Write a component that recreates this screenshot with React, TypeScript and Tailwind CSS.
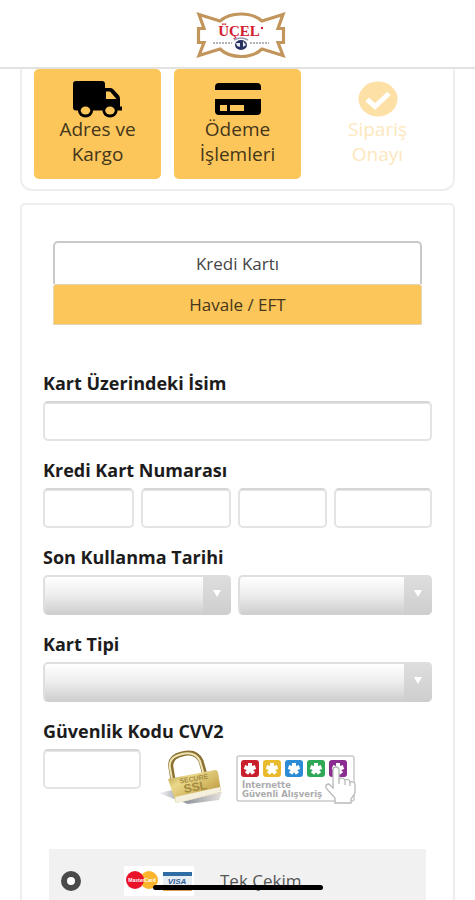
import type { ReactNode } from "react";

const inputClass =
  "block h-10 w-full min-w-0 rounded-[5px] border-2 border-[#e4e4e4] border-t-[#d6d6d6] bg-white px-2 text-base text-gray-800 shadow-[inset_0_1px_0_#e6e6e6] outline-none focus:border-[#fcc65b]";

function Logo() {
  return (
    <svg viewBox="0 0 92 48" className="h-12 w-[92px]" role="img" aria-label="Üçel">
      <path
        d="M4 3.500L25 10Q33 3 46 3Q59 3 67 10L88 3.500L83 17.500H88.500V31.500H83L88 44.500L67 38Q59 45.500 46 45.500Q33 45.500 25 38L4 44.500L9 31.500H3.500V17.500H9Z"
        fill="#fff"
        stroke="#c2955c"
        strokeWidth="3.200"
      />
      <text x="44" y="24.500" textAnchor="middle" fontSize="15" fontWeight="700" fill="#d3202f" fontFamily="Liberation Serif, serif">
        ÜÇEL
      </text>
      <circle cx="67" cy="17" r="1.200" fill="#d3202f" />
      <path d="M39 29Q46 25 53 29" fill="none" stroke="#9a9db5" strokeWidth="1.500" />
      <path d="M18 32H37M55 32H74" stroke="#9a9aa2" strokeWidth="1.500" strokeDasharray="2 1" />
      <ellipse cx="46" cy="34" rx="6" ry="5" fill="#26315f" />
      <path d="M41 32L45 32L45 36L42 35ZM48 30L51 34L48 36Z" fill="#e6e9f4" />
    </svg>
  );
}

function TruckIcon() {
  return (
    <svg viewBox="0 0 50 37" className="h-[37px] w-[50px]" aria-hidden="true">
      <path
        fillRule="evenodd"
        d="M3 0H29Q32 0 32 3V7H37Q39 7 40 8L46 14.500Q47 16 47 18V25.500H49V29.500H3Q0 29.500 0 26.500V3Q0 0 3 0ZM33 10.500V18H43.500L37 10.500Z"
      />
      <ellipse cx="12.500" cy="30" rx="7.500" ry="6.500" />
      <ellipse cx="37" cy="30" rx="7.500" ry="6.500" />
      <ellipse cx="12.500" cy="29.500" rx="4.800" ry="4" fill="#fcc65b" />
      <ellipse cx="37" cy="29.500" rx="4.800" ry="4" fill="#fcc65b" />
    </svg>
  );
}

function CardIcon() {
  return (
    <svg viewBox="0 0 46 32" className="h-8 w-[46px]" aria-hidden="true">
      <path
        fillRule="evenodd"
        d="M4 0H42Q46 0 46 4V7H0V4Q0 0 4 0ZM0 16H46V28Q46 32 42 32H4Q0 32 0 28ZM5 22V28H12V22ZM15 22V28H29V22Z"
      />
    </svg>
  );
}

function CheckIcon() {
  return (
    <svg viewBox="0 0 40 36" className="h-9 w-10" aria-hidden="true">
      <ellipse cx="20" cy="18" rx="19.500" ry="17.500" fill="#fde0a6" />
      <path d="M9 18.500L17 25.500L31 12.500" fill="none" stroke="#fff" strokeWidth="5" />
    </svg>
  );
}

function Step({ icon, lines, done }: { icon: ReactNode; lines: [string, string]; done: boolean }) {
  return (
    <li
      className={
        done
          ? "flex h-[110px] flex-col items-center rounded-[5px] bg-[#fcc65b] pt-3 text-[#45361a]"
          : "flex h-[110px] flex-col items-center pt-3 text-[#fde7bd]"
      }
    >
      <div className="flex h-9 items-center justify-center">{icon}</div>
      <p className="text-center text-[19px] leading-[25px]">
        {lines[0]}
        <br />
        {lines[1]}
      </p>
    </li>
  );
}

function FieldLabel({ htmlFor, children }: { htmlFor: string; children: ReactNode }) {
  return (
    <label htmlFor={htmlFor} className="mb-1.5 block text-lg leading-6 font-bold text-[#1c1c1c]">
      {children}
    </label>
  );
}

function SelectBox({ id, label }: { id: string; label?: string }) {
  return (
    <div className="relative">
      <select
        id={id}
        aria-label={label}
        className="block h-10 w-full appearance-none rounded-[5px] border-2 border-[#dfdfdf] border-b-[#d0d0d0] bg-linear-to-b from-white via-[#ededed] to-[#d0d0d0] px-2 text-base outline-none"
      />
      <span className="pointer-events-none absolute inset-y-0 right-0 flex w-7 items-center justify-center rounded-r-[5px] bg-linear-to-b from-[#dedede] to-[#cecece]">
        <svg viewBox="0 0 8 7" className="mb-1 h-[7px] w-2" aria-hidden="true">
          <path d="M0 0H8L4 7Z" fill="#fff" />
        </svg>
      </span>
    </div>
  );
}

function Padlock() {
  return (
    <svg viewBox="0 0 66 56" className="h-14 w-[66px]" role="img" aria-label="SSL">
      <defs>
        <linearGradient id="brass" x1="0" x2="1" y1="0" y2="1">
          <stop offset="0" stopColor="#b0913c" />
          <stop offset=".3" stopColor="#ead98a" />
          <stop offset=".65" stopColor="#cdb058" />
          <stop offset="1" stopColor="#9a7c30" />
        </linearGradient>
        <linearGradient id="floor" x1="0" x2="1">
          <stop offset="0" stopColor="#fff" />
          <stop offset=".4" stopColor="#8b909b" />
          <stop offset="1" stopColor="#e4e2dc" />
        </linearGradient>
      </defs>
      <path d="M0 43L15 40L24 52L64 42L61 50L30 54Z" fill="url(#floor)" />
      <path d="M15 30L13 18Q11 7 24 4Q38 0 43 11L47 25" fill="none" stroke="#8a7132" strokeWidth="5" />
      <path d="M14 29L12 18Q10 7 24 4Q37 1 42 11L46 25" fill="none" stroke="#eee4b2" strokeWidth="2" />
      <path d="M10 29L57 20Q59 20 60 22L63 42L18 53Z" fill="url(#brass)" />
      <path d="M17 47L62 37L63 42L18 53Z" fill="#f4f0dd" />
      <g transform="rotate(-10 37 35)" fontFamily="Liberation Sans, sans-serif" fontWeight="700" fill="#a38a42" textAnchor="middle">
        <text x="37" y="31" fontSize="7">SECURE</text>
        <text x="37" y="41" fontSize="12">SSL</text>
      </g>
    </svg>
  );
}

const starColors = ["#c9202e", "#e9b92e", "#2b8bd4", "#2fa858", "#8b2c91"];

function SafeShopping() {
  return (
    <svg viewBox="0 0 122 50" className="h-[50px] w-[122px]" role="img" aria-label="İnternette Güvenli Alışveriş">
      <rect x="1" y="1" width="117" height="45" rx="2" fill="#fff" stroke="#cacaca" strokeWidth="1.500" />
      {starColors.map((color, i) => (
        <g key={color} transform={`translate(${5 + i * 22} 5)`}>
          <rect width="18" height="17" rx="3" fill={color} />
          <path d="M9 9V3M9 9L3.500 7M9 9L14.500 7M9 9L5.500 13.500M9 9L12.500 13.500" stroke="#fff" strokeWidth="4" />
        </g>
      ))}
      <text fontFamily="DejaVu Sans, sans-serif" fontSize="8.500" fontWeight="700" fill="#ababab">
        <tspan x="6" y="33">İnternette</tspan>
        <tspan x="6" y="42">Güvenli Alışveriş</tspan>
      </text>
      <path
        d="M97 15Q97 12 100 12Q103 12 103 15V24Q107 22 109 25Q113 23 114 27Q119 26 119 30V38L115 44V48H99V43L90 33Q89 29 93 29L97 33Z"
        fill="#fff"
        stroke="#b9b9b9"
        strokeWidth="1.300"
      />
      <path d="M103 24V29M109 25V30M114 27V31" stroke="#b9b9b9" strokeWidth="1.300" />
    </svg>
  );
}

function CardBrands() {
  return (
    <svg viewBox="0 0 70 30" className="h-[30px] w-[70px]" role="img" aria-label="MasterCard, Visa">
      <rect width="70" height="30" fill="#fff" />
      <circle cx="25" cy="14" r="9" fill="#fbb52c" />
      <circle cx="11" cy="14" r="9" fill="#ea1228" />
      <text x="18" y="16" textAnchor="middle" fontFamily="Liberation Sans, sans-serif" fontSize="5" fontWeight="700" fill="#fff">
        MasterCard
      </text>
      <rect x="39" y="7" width="29" height="18" fill="#e7edf2" />
      <rect x="39" y="6" width="29" height="4" fill="#2f6ca3" />
      <text x="53" y="18" textAnchor="middle" fontFamily="Liberation Sans, sans-serif" fontSize="8" fontWeight="700" fontStyle="italic" fill="#2c5f98">
        VISA
      </text>
      <rect x="39" y="22" width="29" height="3" fill="#dba24a" />
    </svg>
  );
}

export default function App() {
  return (
    <div className="relative flex h-screen flex-col overflow-hidden bg-white font-['Open_Sans','Noto_Sans',sans-serif]">
      <header className="flex h-[69px] shrink-0 items-center justify-center border-b-2 border-[#e2e2e2] pt-0.5 pl-1.5">
        <Logo />
      </header>

      <main className="min-h-0 flex-1 overflow-hidden px-5">
        <ol className="grid grid-cols-3 gap-[13px] rounded-b-xl border-2 border-t-0 border-[#eeeeee] px-3 pb-2.5">
          <Step done icon={<TruckIcon />} lines={["Adres ve", "Kargo"]} />
          <Step done icon={<CardIcon />} lines={["Ödeme", "İşlemleri"]} />
          <Step done={false} icon={<CheckIcon />} lines={["Sipariş", "Onayı"]} />
        </ol>

        <section className="mt-3 rounded-t-[5px] border-2 border-[#eeeeee] px-[21px] pt-9">
          <div className="mx-2.5 flex flex-col text-[17px]">
            <button type="button" className="h-[43px] rounded-t-[5px] border-2 border-b-0 border-[#c9c9c9] bg-white text-[#444444]">
              Kredi Kartı
            </button>
            <button type="button" className="h-[41px] rounded-t-[3px] border border-[#e3d5b5] bg-[#fcc65b] text-[#45361a]">
              Havale / EFT
            </button>
          </div>

          <form className="mt-[46px]">
            <div className="mb-[17px]">
              <FieldLabel htmlFor="holder">Kart Üzerindeki İsim</FieldLabel>
              <input id="holder" type="text" className={inputClass} />
            </div>

            <div className="mb-[17px]">
              <FieldLabel htmlFor="number-1">Kredi Kart Numarası</FieldLabel>
              <div className="grid grid-cols-[91fr_90fr_90fr_98fr] gap-[7px]">
                <input id="number-1" type="text" inputMode="numeric" className={inputClass} />
                <input aria-label="Kredi Kart Numarası 2" type="text" inputMode="numeric" className={inputClass} />
                <input aria-label="Kredi Kart Numarası 3" type="text" inputMode="numeric" className={inputClass} />
                <input aria-label="Kredi Kart Numarası 4" type="text" inputMode="numeric" className={inputClass} />
              </div>
            </div>

            <div className="mb-[17px]">
              <FieldLabel htmlFor="month">Son Kullanma Tarihi</FieldLabel>
              <div className="grid grid-cols-[188fr_195fr] gap-[7px]">
                <SelectBox id="month" />
                <SelectBox id="year" label="Yıl" />
              </div>
            </div>

            <div className="mb-[17px]">
              <FieldLabel htmlFor="card-type">Kart Tipi</FieldLabel>
              <SelectBox id="card-type" />
            </div>

            <FieldLabel htmlFor="cvv">Güvenlik Kodu CVV2</FieldLabel>
            <div className="flex items-start">
              <div className="w-[98px]">
                <input id="cvv" type="text" inputMode="numeric" className={inputClass} />
              </div>
              <div className="mt-px ml-[17px]">
                <Padlock />
              </div>
              <div className="mt-1.5 ml-3">
                <SafeShopping />
              </div>
            </div>

            <label className="mx-1.5 mt-[43px] flex h-16 items-center bg-[#f1f1f1] pl-3 text-[17px] text-[#555555]">
              <input
                type="radio"
                name="installment"
                defaultChecked
                className="size-5 appearance-none rounded-full border-[6px] border-[#4a4a4a] bg-white"
              />
              <span className="ml-[43px]">
                <CardBrands />
              </span>
              <span className="ml-[26px]">Tek Çekim</span>
            </label>
          </form>
        </section>
      </main>

      <div className="absolute bottom-2.5 left-1/2 h-[5px] w-[170px] -translate-x-1/2 rounded-full bg-black" />
    </div>
  );
}
